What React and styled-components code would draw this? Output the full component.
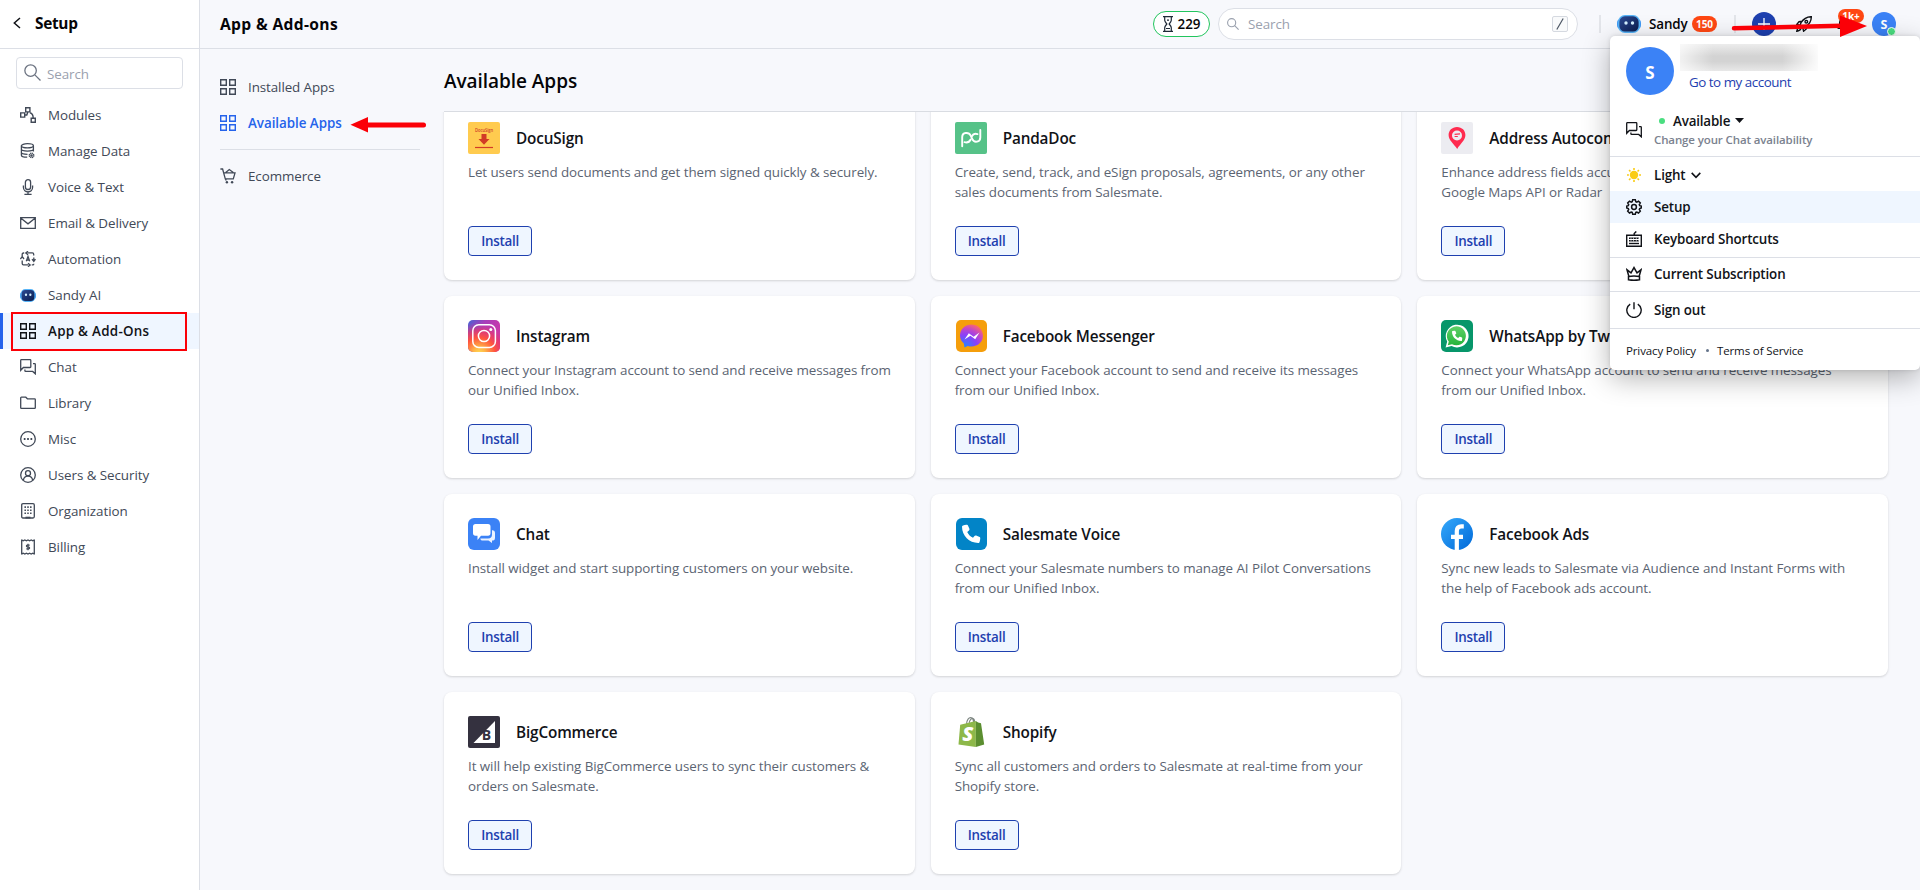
import React from "react";
import styled, { createGlobalStyle } from "styled-components";
import { FaPhone } from "react-icons/fa6";

const GlobalStyle = createGlobalStyle`
  *, *::before, *::after { box-sizing: border-box; }
  body {
    margin: 0;
    overflow: hidden;
    background: #f7f8fc;
    color: #111318;
    font-family: "Open Sans", "Noto Sans", sans-serif;
    font-size: 13.4px;
    letter-spacing: -0.07px;
  }
`;

/* ---------- layout ---------- */

const Page = styled.div`
  position: relative;
  display: flex;
  height: 890px;
  overflow: hidden;
`;

const Sidebar = styled.aside`
  position: relative;
  flex: none;
  width: 200px;
  background: #fff;
  border-right: 1px solid #dcdfe6;
`;

const SidebarHeader = styled.div`
  display: flex;
  align-items: center;
  gap: 14px;
  height: 49px;
  padding: 0 0 2px 13px;
  border-bottom: 1px solid #dcdfe6;
  font-size: 15.4px;
  font-weight: 700;
  letter-spacing: -0.3px;
  color: #050508;
`;

const SidebarSearch = styled.div`
  display: flex;
  align-items: center;
  gap: 6px;
  height: 32px;
  margin: 8px 16px;
  padding: 2px 7px 0;
  border: 1px solid #dcdfe6;
  border-radius: 4px;
  color: #9aa1ae;
  svg { margin-top: -4px; }
`;

const NavItem = styled.a`
  display: flex;
  align-items: center;
  gap: 12px;
  height: 36px;
  padding: 0 0 1px ${(p) => (p.$active ? 17 : 20)}px;
  border-left: ${(p) => (p.$active ? "3px solid #2563eb" : "none")};
  background: ${(p) => (p.$active ? "#eff6ff" : "transparent")};
  color: ${(p) => (p.$active ? "#111318" : "#414957")};
  font-weight: ${(p) => (p.$active ? 600 : 400)};
  letter-spacing: ${(p) => (p.$active ? "0.28px" : "-0.06px")};
  svg { margin-top: 1px; }
`;

const NavFrame = styled.div`
  position: absolute;
  left: 11px;
  top: 312px;
  width: 176px;
  height: 39px;
  border: 2px solid #fb0007;
`;

const Main = styled.div`
  flex: 1;
  min-width: 0;
  display: flex;
  flex-direction: column;
`;

const TopBar = styled.header`
  position: relative;
  flex: none;
  display: flex;
  align-items: center;
  height: 49px;
  padding: 0 24px 0 20px;
  border-bottom: 1px solid #dcdfe6;
`;

const PageTitle = styled.h1`
  flex: 1;
  margin: 0;
  font-size: 15.6px;
  font-weight: 700;
  letter-spacing: 0.35px;
  color: #050508;
`;

const TrialPill = styled.div`
  display: flex;
  align-items: center;
  justify-content: center;
  gap: 5px;
  width: 57px;
  height: 26px;
  margin-right: 8px;
  border: 1px solid #22c55e;
  border-radius: 13px;
  background: #fff;
  font-weight: 600;
  color: #050508;
`;

const GlobalSearch = styled.div`
  display: flex;
  align-items: center;
  gap: 9px;
  width: 360px;
  height: 32px;
  padding: 0 9px 0 8px;
  border: 1px solid #dcdfe6;
  border-radius: 16px;
  background: #fff;
  color: #9aa1ae;
  span { flex: 1; }
`;

const KeyHint = styled.kbd`
  display: flex;
  align-items: center;
  justify-content: center;
  width: 16px;
  height: 16px;
  border: 1px solid #d5d9e0;
  border-radius: 2px;
  background: #f9fafb;
`;

const Separator = styled.i`
  width: 2px;
  height: 18px;
  margin-left: ${(p) => p.$left}px;
  background: #e3e5ea;
`;

const SandyButton = styled.div`
  display: flex;
  align-items: center;
  margin-left: 16px;
  font-weight: 600;
  color: #050508;
  span { width: 39px; margin-left: 8px; letter-spacing: -0.1px; }
`;

const CountBadge = styled.b`
  display: flex;
  align-items: center;
  justify-content: center;
  width: 25px;
  height: 16px;
  margin-left: 4px;
  border-radius: 8px;
  background: #ff4713;
  color: #fff;
  font-size: 10px;
  font-weight: 700;
  letter-spacing: 0;
`;

const AddButton = styled.div`
  display: flex;
  align-items: center;
  justify-content: center;
  width: 24px;
  height: 24px;
  margin: 0 20px 0 16px;
  border-radius: 50%;
  background: #1e40af;
`;

const BellButton = styled.div`
  position: relative;
  display: flex;
  margin: 0 20px 0 24px;
`;

const BellCount = styled.b`
  position: absolute;
  left: 2px;
  top: -7px;
  width: 26px;
  height: 14px;
  border-radius: 7px;
  background: #ff4713;
  color: #fff;
  font-size: 10px;
  line-height: 14px;
  text-align: center;
`;

const Avatar = styled.div`
  position: relative;
  flex: none;
  display: flex;
  align-items: center;
  justify-content: center;
  width: ${(p) => p.$size}px;
  height: ${(p) => p.$size}px;
  padding-top: ${(p) => p.$drop || 0}px;
  border-radius: 50%;
  background: #3b82f6;
  color: #fff;
  font-size: ${(p) => p.$font}px;
  font-weight: 700;
`;

const Presence = styled.i`
  position: absolute;
  right: 0;
  bottom: 0;
  width: 9px;
  height: 9px;
  border: 1px solid #fff;
  border-radius: 50%;
  background: #4ade80;
`;

const Body = styled.div`
  flex: 1;
  min-height: 0;
  display: flex;
`;

const SubNav = styled.nav`
  flex: none;
  width: 220px;
  margin-right: 24px;
  padding: 20px 0 0 20px;
`;

const SubNavItem = styled.a`
  display: flex;
  align-items: center;
  gap: 12px;
  height: 36px;
  color: ${(p) => (p.$active ? "#2563eb" : "#414957")};
  font-weight: ${(p) => (p.$active ? 600 : 400)};
  letter-spacing: ${(p) => (p.$active ? "-0.04px" : "-0.09px")};
`;

const SubNavDivider = styled.hr`
  height: 1px;
  margin: 8px 0;
  border: 0;
  background: #dcdfe6;
`;

const Content = styled.main`
  flex: 1;
  min-width: 0;
  display: flex;
  flex-direction: column;
  padding-right: 32px;
`;

const SectionTitle = styled.h2`
  flex: none;
  height: 63px;
  margin: 0;
  border-bottom: 1px solid #d9dce2;
  font-size: 19px;
  font-weight: 600;
  line-height: 64px;
  letter-spacing: -0.05px;
  color: #050508;
`;

const Scroller = styled.div`
  flex: 1;
  display: flex;
  flex-direction: column;
  justify-content: flex-end;
  overflow: hidden;
  margin: 0 -4px;
  padding: 0 4px 16px;
`;

const CardGrid = styled.div`
  display: grid;
  grid-template-columns: repeat(3, minmax(0, 1fr));
  grid-auto-rows: 182px;
  gap: 16px;
`;

const Card = styled.article`
  display: flex;
  flex-direction: column;
  align-items: flex-start;
  padding: 24px;
  border-radius: 8px;
  background: #fff;
  box-shadow: 0 1px 3px rgba(0, 0, 0, 0.1), 0 1px 2px rgba(0, 0, 0, 0.06);
`;

const CardHead = styled.div`
  display: flex;
  align-items: center;
  gap: 16px;
  height: 32px;
`;

const CardTitle = styled.h3`
  margin: 0;
  padding-bottom: 1px;
  font-size: 15.3px;
  font-weight: 600;
  letter-spacing: -0.14px;
  color: #111318;
`;

const CardText = styled.p`
  height: 40px;
  margin: 8px 0 24px;
  line-height: 20px;
  white-space: pre;
  color: #5b6472;
`;

const InstallButton = styled.button`
  width: 64px;
  height: 30px;
  padding: 0;
  border: 1px solid #1e40af;
  border-radius: 4px;
  background: #eff6ff;
  color: #1e40af;
  font: 600 13.4px "Open Sans", "Noto Sans", sans-serif;
  letter-spacing: -0.28px;
`;

/* ---------- account menu ---------- */

const AccountMenu = styled.div`
  position: absolute;
  left: 1610px;
  top: 36px;
  width: 310px;
  height: 334px;
  border-radius: 5px;
  background: #fff;
  box-shadow: 0 8px 28px rgba(0, 0, 0, 0.3), 0 0 4px rgba(0, 0, 0, 0.12);
`;

const MenuProfile = styled.div`
  display: flex;
  gap: 6px;
  height: 70px;
  padding: 11px 0 0 16px;
`;

const ProfileText = styled.div`
  display: flex;
  flex-direction: column;
  margin-top: -3px;
`;

const RedactedName = styled.div`
  width: 138px;
  height: 27px;
  background:
    linear-gradient(90deg, rgba(255, 255, 255, 0.7), rgba(255, 255, 255, 0) 24%, rgba(255, 255, 255, 0) 74%, rgba(255, 255, 255, 0.9)),
    linear-gradient(180deg, #ececec, #d3d3d3 45%, #d3d3d3 65%, #e8e8e8);
`;

const AccountLink = styled.a`
  margin: 1px 0 0 9px;
  line-height: 20px;
  color: #1e40af;
  letter-spacing: -0.48px;
`;

const MenuStatus = styled.div`
  display: flex;
  align-items: center;
  gap: 12px;
  height: 51px;
  padding: 0 0 2px 16px;
  border-bottom: 1px solid #dcdfe6;
`;

const StatusLine = styled.div`
  display: flex;
  align-items: center;
  margin-top: -1px;
  line-height: 20px;
  font-weight: 600;
  letter-spacing: -0.18px;
  i {
    width: 6px;
    height: 6px;
    margin: 1px 8px 0 5px;
    border-radius: 50%;
    background: #4ade80;
  }
  svg { margin-left: 5px; }
`;

const StatusHint = styled.div`
  font-size: 11.5px;
  font-weight: 600;
  line-height: 18px;
  letter-spacing: -0.12px;
  color: #7b828f;
`;

const MenuGroup = styled.div`
  padding: ${(p) => p.$pad || "0"};
  border-bottom: 1px solid #dcdfe6;
`;

const MenuItem = styled.div`
  display: flex;
  align-items: center;
  gap: 12px;
  height: ${(p) => p.$h || 32}px;
  padding-left: 16px;
  background: ${(p) => (p.$active ? "#eff6ff" : "transparent")};
  font-weight: 600;
  letter-spacing: -0.15px;
  span { display: flex; align-items: center; gap: 6px; }
`;

const MenuFooter = styled.div`
  display: flex;
  align-items: center;
  height: 43px;
  padding-left: 16px;
  font-size: 11.5px;
  letter-spacing: -0.13px;
  i {
    width: 3px;
    height: 3px;
    margin: 0 8px 0 10px;
    border-radius: 50%;
    background: #64748b;
  }
`;

const Arrow = styled.svg`
  position: absolute;
  left: ${(p) => p.$x}px;
  top: ${(p) => p.$y}px;
`;

/* ---------- icons ---------- */

const IconSvg = styled.svg`
  flex: none;
`;

const Line = ({ size = 16, w = 1.3, children }) => (
  <IconSvg width={size} height={size} viewBox="0 0 16 16" fill="none" stroke="currentColor" strokeWidth={w}>
    {children}
  </IconSvg>
);

const GridIcon = () => (
  <Line w={1.4}>
    <path d="M.7.7h5.600v5.600H.7zM9.700.7h5.600v5.600H9.700zM.7 9.700h5.600v5.600H.7zM9.700 9.700h5.600v5.600H9.700z" />
  </Line>
);

const ChatIcon = () => (
  <Line>
    <path d="M.7 11.300V1.400q0-.7.7-.7h8.700q.7 0 .7.7v6.400q0 .7-.7.7H3.400zM13 4.600h1.600q.7 0 .7.7v9.500l-2.600-2.400H5.600q-.7 0-.7-.7v-1.300" />
  </Line>
);

const BotIcon = ({ width = 16, height = 13 }) => (
  <IconSvg width={width} height={height} viewBox="0 0 24 18" preserveAspectRatio="none">
    <defs>
      <linearGradient id="bot" x1="0" y1="0" x2="1" y2="1">
        <stop offset="0" stopColor="#2c4a94" />
        <stop offset="1" stopColor="#0b1c4d" />
      </linearGradient>
    </defs>
    <rect x="0" y="4" width="24" height="10" rx="4" fill="#3f9af5" />
    <rect x="1" y="0" width="22" height="18" rx="7" fill="#57b4f7" />
    <rect x="2.4" y="1.3" width="19.2" height="15.2" rx="5.5" fill="url(#bot)" />
    <circle cx="9" cy="8" r="1.7" fill="#d5f1ff" />
    <circle cx="15.5" cy="8" r="1.7" fill="#d5f1ff" />
  </IconSvg>
);

const SearchIcon = ({ size = 16, w = 1.2 }) => (
  <Line size={size} w={w}>
    <circle cx="6.2" cy="6.2" r="5.4" />
    <path d="M10.2 10.2l5.3 5.3" />
  </Line>
);

const icons = {
  modules: (
    <Line w={1.4}>
      <path d="M5.7.7h4.2v4.2H5.7zM.7 5.9h4v4.2h-4zM11.2 11.2h4.1v4.1h-4.1zM4.7 8h2.1l1-3M9.9 5.7c2 .4 3.3 2 3.3 5.5" />
    </Line>
  ),
  data: (
    <Line w={1.3}>
      <ellipse cx="7.4" cy="2.8" rx="6" ry="2.1" />
      <path d="M1.4 2.8v9.4c0 1.1 2.4 2 5.8 2M13.4 2.8v5.6M1.4 6c0 1.2 2.7 2.1 6 2.1s6-.9 6-2.1M1.4 9.2c0 1.2 2.7 2.1 6.1 2.1" />
      <circle cx="11.5" cy="12.4" r="2.2" strokeDasharray="1.1 .5" strokeWidth="1.5" />
      <circle cx="11.5" cy="12.4" r=".6" />
    </Line>
  ),
  voice: (
    <Line>
      <rect x="5.4" y=".7" width="5.2" height="9.8" rx="2.6" />
      <path d="M3.4 6.5v1.8c0 6 9.2 6 9.2 0V6.5M8 12.8v2.4M4.4 15.3h7.2" />
    </Line>
  ),
  email: (
    <Line>
      <path d="M.7 2.7h14.6v10.6H.7zM1 3.2l7 5.6 7-5.6" />
    </Line>
  ),
  automation: (
    <Line w={1.3}>
      <path d="M4.2 2H3.4q-1.2 0-1.2 1.3v2.2M.4 8l1.8-2.4L4 8M7.6 1.9h4.8q1.3 0 1.3 1.3v1.3M8 .2L5.8 1.9 8 3.7M13.8 6.5v4.2M15.5 8.2l-1.7 2.2-1.8-2.2M2.2 9.5v3q0 1.3 1.3 1.3h4.7M8 12.2l2.2 1.7L8 15.7M11.8 13.9h.9q1.1 0 1.1-1.2M6.3 10.3L8 5.4l1.7 4.9M6.9 9h2.2" />
    </Line>
  ),
  bot: <BotIcon />,
  grid: <GridIcon />,
  chat: <ChatIcon />,
  folder: (
    <Line>
      <path d="M.7 2.9q0-.7.7-.7h4.4l1.6 1.6h7.2q.7 0 .7.7v8.2q0 .7-.7.7H1.4q-.7 0-.7-.7z" />
    </Line>
  ),
  misc: (
    <Line>
      <circle cx="8" cy="8" r="7.3" />
      <path d="M3.8 8h1.7M7.15 8h1.7M10.5 8h1.7" strokeWidth="1.8" />
    </Line>
  ),
  users: (
    <Line>
      <circle cx="8" cy="8" r="7.3" />
      <circle cx="8" cy="6.2" r="2.5" />
      <path d="M3.4 13.3c.5-5.6 8.7-5.6 9.2 0" />
    </Line>
  ),
  org: (
    <Line>
      <path d="M1.7 2q0-1.300 1.3-1.300h10q1.3 0 1.3 1.300v11.500q0 1.5-1.3 1.5H3q-1.300 0-1.300-1.500z" />
      <path d="M5.2 3.300v8M8 3.300v8M10.800 3.300v8" strokeDasharray="1.600 1.500" strokeWidth="1.500" />
      <path d="M5.500 14.600h5" strokeWidth="1.800" />
    </Line>
  ),
  billing: (
    <Line>
      <path d="M1.700.5v15M14.300.5v15" />
      <path d="M1.700 1.200l1.500.6L4.800 1l1.600.8L8 1l1.600.8L11.200 1l1.600.8 1.500-.6M1.700 14.800l1.500-.6 1.600.8 1.600-.8 1.600.8 1.600-.8 1.600.8 1.600-.8 1.500.6" />
      <path d="M9.700 6.200H7.300q-.9.100-.9.900t.9.900h1.400q.9.100.9.900t-.9.900H6.300M8 4.700v6.600" strokeWidth="1.200" />
    </Line>
  ),
  cart: (
    <Line w={1.300}>
      <path d="M.4 1h2.200l2.700 9.900h8l1.700-6H4M5.700 4.600L9.300 1.600l4 3M6.200 12.600l-.7-1.700" />
      <circle cx="6.900" cy="14.200" r="1.200" fill="currentColor" stroke="none" />
      <circle cx="12.100" cy="14.200" r="1.200" fill="currentColor" stroke="none" />
    </Line>
  ),
};

const Hourglass = () => (
  <svg width="10" height="16" viewBox="0 0 10 16" fill="none" stroke="#1f2937" strokeWidth="1.2">
    <path d="M0 .7h10M0 15.300h10M1.700.7v3.600Q1.700 5.500 3.800 8 1.700 10.500 1.700 11.700v3.600M8.300.7v3.600Q8.300 5.500 6.200 8q2.100 2.500 2.100 3.700v3.600" />
    <path d="M3 12.500h4M4 4.200h2" />
  </svg>
);

const Rocket = () => (
  <svg width="16" height="16" viewBox="0 0 16 16" fill="none" stroke="#111318" strokeWidth="1.400">
    <path d="M15.300.7C11 .6 8 2 5 6.600L4.200 9.200l2.600 2.600 2.600-.8C14 8 15.400 5 15.300.7zM6.200 5.200L3 5.700.8 8.400l3.400.7M10.800 9.800L10.300 13l-2.700 2.200-.8-3.400M3.500 11.100Q1.400 11.700.8 15.200q3.500-.6 4.100-2.700" />
    <circle cx="10.300" cy="5.700" r="1.300" />
  </svg>
);

const Bell = () => (
  <Line w={1.400}>
    <path d="M2.500 12.300h11l-1.200-2V6.500a4.300 4.300 0 0 0-8.600 0v3.800z" />
  </Line>
);

const Sun = () => (
  <svg width="16" height="16" viewBox="0 0 16 16">
    <circle cx="8" cy="8" r="4.200" fill="#facc15" />
    <path d="M8 1v1.900M8 13.100V15M1 8h1.900M13.100 8H15M3.050 3.050l1.400 1.400M11.550 11.550l1.400 1.400M3.050 12.950l1.400-1.400M11.550 4.450l1.400-1.400" stroke="#facc15" strokeWidth="1.600" />
  </svg>
);

const Gear = () => (
  <Line w={1.500}>
    <circle cx="8" cy="8" r="2.400" />
    <path d="M6.700.8h2.600l.5 1.900 1 .4 1.700-1 1.800 1.800-1 1.700.4 1 1.600.5v1.900l-1.600.5-.4 1 1 1.700-1.800 1.800-1.700-1-1 .4-.5 1.900H6.700l-.5-1.900-1-.4-1.700 1-1.800-1.800 1-1.700-.4-1L.7 9V7.100l1.600-.5.4-1-1-1.700 1.800-1.800 1.700 1 1-.4z" />
  </Line>
);

const Keyboard = () => (
  <Line w={1.400}>
    <path d="M.7 4.200h14.600v11.100H.7zM8.200 4V2.600L10.300.4M3 7.300h10M3 9.800h10" />
    <path d="M3 7.300h10M3 9.800h10" stroke="#fff" strokeWidth="1.500" strokeDasharray=".6 2" strokeDashoffset="-1.700" />
    <path d="M3 12.500h10" />
  </Line>
);

const Crown = () => (
  <Line w={1.500}>
    <path d="M2.900 10.500L1 3.800l4 3L8 1.600l3 5.200 4-3-1.900 6.700M2.500 10.600q5.500-1 11 0v3.200q-5.500 1-11 0z" />
  </Line>
);

const Power = () => (
  <Line w={1.400}>
    <path d="M4.200 2.100a7.200 7.200 0 1 0 7.600 0M8 .3v7" />
  </Line>
);

/* ---------- app logos ---------- */

const Logo = ({ bg, r = 2, children }) => (
  <IconSvg width="32" height="32" viewBox="0 0 32 32">
    {bg && <rect width="32" height="32" rx={r} fill={bg} />}
    {children}
  </IconSvg>
);

const logos = {
  docusign: (
    <Logo bg="#ffcb4f">
      <text x="7" y="10" fontSize="5" textLength="18" lengthAdjust="spacingAndGlyphs" fill="#d0402b" fontFamily="Open Sans" fontWeight="600">DocuSign</text>
      <path d="M13.500 12h5v5h3L16 22.800 10.500 17h3z" fill="#d23b26" />
      <path d="M7 25.500h18" stroke="#d23b26" strokeWidth="1.200" />
    </Logo>
  ),
  pandadoc: (
    <Logo bg="#56c288">
      <g fill="none" stroke="#fff" strokeWidth="1.900" strokeLinecap="round">
        <path d="M7.200 24.300V15.200c0-5 6.500-5.600 8.500-1.500l1.500 3.200c2 4.500 8.100 3.300 8.100-1.500V8" />
        <path d="M9.500 20.200c3 .8 5-.3 6.200-2.700M17 14c1-2 3.300-2.700 5.500-1.900" />
      </g>
    </Logo>
  ),
  address: (
    <Logo bg="#ececf1">
      <path d="M16 5c-5 0-8.400 3.600-8.400 8.100C7.600 18.500 13 22 16.200 27 19 22 24.400 18.500 24.400 13.100 24.400 8.600 21 5 16 5z" fill="#ff2b4f" />
      <circle cx="16" cy="13.500" r="5" fill="#ececf1" />
      <path d="M13.600 12.300l5.400-.4M13.600 14.500h3.200" stroke="#ff2b4f" strokeWidth="1.200" />
    </Logo>
  ),
  instagram: (
    <Logo>
      <defs>
        <linearGradient id="ig1" x1="0" y1="0" x2="1" y2=".25">
          <stop offset="0" stopColor="#4a62d4" />
          <stop offset=".5" stopColor="#a43dbb" />
          <stop offset="1" stopColor="#c837ab" />
        </linearGradient>
        <radialGradient id="ig2" cx=".35" cy="1.050" r="1">
          <stop offset="0" stopColor="#ffdd55" />
          <stop offset=".2" stopColor="#ffb347" />
          <stop offset=".5" stopColor="#ff543e" />
          <stop offset=".72" stopColor="#e83a6b" stopOpacity=".8" />
          <stop offset="1" stopColor="#c837ab" stopOpacity="0" />
        </radialGradient>
      </defs>
      <rect width="32" height="32" rx="5" fill="url(#ig1)" />
      <rect width="32" height="32" rx="5" fill="url(#ig2)" />
      <g fill="none" stroke="#fff" strokeWidth="1.500">
        <rect x="4.800" y="4.800" width="22.600" height="22.600" rx="6" />
        <circle cx="16" cy="16" r="5.600" />
      </g>
      <circle cx="22.800" cy="9.400" r="1.500" fill="#fff" />
    </Logo>
  ),
  messenger: (
    <Logo>
      <defs>
        <radialGradient id="ms" cx=".2" cy="1" r="1.100">
          <stop offset="0" stopColor="#1f8bff" />
          <stop offset=".5" stopColor="#8a3ff9" />
          <stop offset=".75" stopColor="#c246c8" />
          <stop offset="1" stopColor="#ff6968" />
        </radialGradient>
      </defs>
      <rect x="1" width="31" height="32" rx="5" fill="#f59e0b" />
      <path d="M16.500 4.500C10 4.500 5 9.200 5 15.600c0 3.300 1.400 5.900 3.800 7.800L9.500 27.600l3.300-1.600c1.200.4 2.400.5 3.700.5C23 26.500 28 22 28 15.600S23 4.500 16.500 4.500z" fill="url(#ms)" />
      <path d="M9.500 19.500l4.300-6.300 4.800 3.500 5.900-4.200-4.300 6.800-4.800-3.500z" fill="#fff" />
    </Logo>
  ),
  whatsapp: (
    <Logo bg="#07966a" r={5}>
      <defs>
        <linearGradient id="wa" x1="0" y1="0" x2="0" y2="1">
          <stop offset="0" stopColor="#5fd068" />
          <stop offset="1" stopColor="#25b43a" />
        </linearGradient>
      </defs>
      <path d="M4.600 27.500l1.600-5.900A11.400 11.400 0 1 1 10.600 26z" fill="#fff" />
      <path d="M6.800 25.300l1-3.700A9.500 9.500 0 1 1 11 24.300z" fill="url(#wa)" />
      <g transform="translate(11 10.500)" color="#fff"><FaPhone size={10.500} /></g>
    </Logo>
  ),
  chat: (
    <Logo bg="#3b82f6" r={6}>
      <path d="M7.500 6H20q2.500 0 2.500 2.500V15q0 2.800-2.500 2.800h-7L9.500 22v-4.200H7.500Q5 17.800 5 15V8.500Q5 6 7.500 6z" fill="#fff" />
      <path d="M24 12.200h.8q2.200.4 2.200 2.500V20q0 2.200-1.700 2.500H24V25l-3.500-2.500H14q-1.500 0-1.700-2H20q4 0 4-4z" fill="#eaf2ff" />
    </Logo>
  ),
  voice: (
    <Logo>
      <rect x="1" width="31" height="32" rx="6" fill="#0284c7" />
      <g transform="translate(7 6.500)" color="#fff"><FaPhone size={18.500} /></g>
    </Logo>
  ),
  facebook: (
    <Logo>
      <defs>
        <linearGradient id="fb" x1="0" y1="0" x2="1" y2="1">
          <stop offset="0" stopColor="#35a9fb" />
          <stop offset="1" stopColor="#0068d8" />
        </linearGradient>
      </defs>
      <circle cx="16" cy="16" r="16" fill="url(#fb)" />
      <path d="M15.800 32V13q0-4.700 4.500-4.700h2.500M10 18.800h12" fill="none" stroke="#fff" strokeWidth="4.200" />
    </Logo>
  ),
  bigcommerce: (
    <Logo bg="#34313f">
      <path d="M27 5v22H5.500z" fill="#fff" />
      <text x="13.800" y="24" fontSize="14" fontWeight="700" fontFamily="Open Sans" fill="#34313f">B</text>
    </Logo>
  ),
  shopify: (
    <Logo>
      <path d="M11.500 8c.5-4 2.500-6.500 4.500-6.400 2 0 2.500 2.600 2.600 5.400M14 7.500c.8-3.700 2.500-5.400 4-5 1.300.4 1.700 2.300 1.700 4" fill="none" stroke="#7c8580" strokeWidth="1.100" />
      <path d="M5.200 8.800L20.800 5v26L3.500 28.400z" fill="#8db849" />
      <path d="M20.800 5l2.300 1.500 2.900.7 3.200 21.300-8.400 2.500z" fill="#5b8e30" />
      <text x="7.300" y="25" fontSize="20" fontWeight="800" fontStyle="italic" fontFamily="Open Sans" fill="#fff" textLength="11" lengthAdjust="spacingAndGlyphs">S</text>
    </Logo>
  ),
};

/* ---------- data ---------- */

const navItems = [
  ["modules", "Modules"],
  ["data", "Manage Data"],
  ["voice", "Voice & Text"],
  ["email", "Email & Delivery"],
  ["automation", "Automation"],
  ["bot", "Sandy AI"],
  ["grid", "App & Add-Ons"],
  ["chat", "Chat"],
  ["folder", "Library"],
  ["misc", "Misc"],
  ["users", "Users & Security"],
  ["org", "Organization"],
  ["billing", "Billing"],
];

const apps = [
  ["docusign", "DocuSign", "Let users send documents and get them signed quickly & securely."],
  ["pandadoc", "PandaDoc", "Create, send, track, and eSign proposals, agreements, or any other\nsales documents from Salesmate."],
  ["address", "Address Autocomplete", "Enhance address fields accuracy\nGoogle Maps API or Radar"],
  ["instagram", "Instagram", "Connect your Instagram account to send and receive messages from\nour Unified Inbox."],
  ["messenger", "Facebook Messenger", "Connect your Facebook account to send and receive its messages\nfrom our Unified Inbox."],
  ["whatsapp", "WhatsApp by Twilio", "Connect your WhatsApp account to send and receive messages\nfrom our Unified Inbox."],
  ["chat", "Chat", "Install widget and start supporting customers on your website."],
  ["voice", "Salesmate Voice", "Connect your Salesmate numbers to manage AI Pilot Conversations\nfrom our Unified Inbox."],
  ["facebook", "Facebook Ads", "Sync new leads to Salesmate via Audience and Instant Forms with\nthe help of Facebook ads account."],
  ["bigcommerce", "BigCommerce", "It will help existing BigCommerce users to sync their customers &\norders on Salesmate."],
  ["shopify", "Shopify", "Sync all customers and orders to Salesmate at real-time from your\nShopify store."],
];

export default function App() {
  return (
    <>
      <GlobalStyle />
      <Page>
        <Sidebar>
          <SidebarHeader>
            <svg width="8" height="12" viewBox="0 0 8 12" fill="none" stroke="#111318" strokeWidth="1.500">
              <path d="M7 1L1.300 6 7 11" />
            </svg>
            Setup
          </SidebarHeader>
          <SidebarSearch>
            <svg width="17" height="17" viewBox="0 0 16 16" fill="none" stroke="#6b7280" strokeWidth="1.200">
              <circle cx="6.200" cy="6.200" r="5.400" />
              <path d="M10.200 10.200l5.300 5.300" />
            </svg>
            Search
          </SidebarSearch>
          {navItems.map(([icon, label]) => (
            <NavItem key={label} $active={icon === "grid"}>
              {icons[icon]}
              {label}
            </NavItem>
          ))}
          <NavFrame />
        </Sidebar>

        <Main>
          <TopBar>
            <PageTitle>App &amp; Add-ons</PageTitle>
            <TrialPill>
              <Hourglass />
              229
            </TrialPill>
            <GlobalSearch>
              <SearchIcon size={12} w={1.500} />
              <span>Search</span>
              <KeyHint>
                <svg width="8" height="12" viewBox="0 0 8 12" stroke="#4b5563" strokeWidth="1.200">
                  <path d="M7.200.5L.8 11.500" />
                </svg>
              </KeyHint>
            </GlobalSearch>
            <Separator $left={21} />
            <SandyButton>
              <BotIcon width={24} height={18} />
              <span>Sandy</span>
              <CountBadge>150</CountBadge>
            </SandyButton>
            <Separator $left={17} />
            <AddButton>
              <svg width="12" height="12" stroke="#fff" strokeWidth="1.300">
                <path d="M6 0v12M0 6h12" />
              </svg>
            </AddButton>
            <Rocket />
            <BellButton>
              <Bell />
              <BellCount>1k+</BellCount>
            </BellButton>
            <Avatar $size={24} $font={12.500} $drop={1}>
              S
              <Presence />
            </Avatar>
          </TopBar>

          <Body>
            <SubNav>
              <SubNavItem>
                <GridIcon />
                Installed Apps
              </SubNavItem>
              <SubNavItem $active>
                <GridIcon />
                Available Apps
              </SubNavItem>
              <SubNavDivider />
              <SubNavItem>
                {icons.cart}
                Ecommerce
              </SubNavItem>
            </SubNav>

            <Content>
              <SectionTitle>Available Apps</SectionTitle>
              <Scroller>
                <CardGrid>
                  {apps.map(([logo, title, text]) => (
                    <Card key={title}>
                      <CardHead>
                        {logos[logo]}
                        <CardTitle>{title}</CardTitle>
                      </CardHead>
                      <CardText>{text}</CardText>
                      <InstallButton>Install</InstallButton>
                    </Card>
                  ))}
                </CardGrid>
              </Scroller>
            </Content>
          </Body>
        </Main>

        <AccountMenu>
          <MenuProfile>
            <Avatar $size={48} $font={17} $drop={2}>S</Avatar>
            <ProfileText>
              <RedactedName />
              <AccountLink>Go to my account</AccountLink>
            </ProfileText>
          </MenuProfile>
          <MenuStatus>
            <ChatIcon />
            <div>
              <StatusLine>
                <i />
                Available
                <svg width="9" height="5" viewBox="0 0 9 5"><path d="M0 0h9L4.500 5z" fill="#111318" /></svg>
              </StatusLine>
              <StatusHint>Change your Chat availability</StatusHint>
            </div>
          </MenuStatus>
          <MenuGroup $pad="2px 0">
            <MenuItem>
              <Sun />
              <span>
                Light
                <svg width="10" height="7" viewBox="0 0 10 7" fill="none" stroke="#111318" strokeWidth="1.600"><path d="M.7.9L5 5.300 9.300.9" /></svg>
              </span>
            </MenuItem>
            <MenuItem $active>
              <Gear />
              Setup
            </MenuItem>
            <MenuItem>
              <Keyboard />
              Keyboard Shortcuts
            </MenuItem>
          </MenuGroup>
          <MenuGroup $pad="0 0 1px">
            <MenuItem $h={32}>
              <Crown />
              Current Subscription
            </MenuItem>
          </MenuGroup>
          <MenuGroup>
            <MenuItem $h={36}>
              <Power />
              Sign out
            </MenuItem>
          </MenuGroup>
          <MenuFooter>
            Privacy Policy
            <i />
            Terms of Service
          </MenuFooter>
        </AccountMenu>

        <Arrow $x={350} $y={116} width="78" height="18">
          <path d="M15 9h58.500" stroke="#fb0007" strokeWidth="5" strokeLinecap="round" />
          <path d="M.5 8.700L18 1v15.500z" fill="#fb0007" />
        </Arrow>
        <Arrow $x={1730} $y={14} width="140" height="26">
          <path d="M4 14.200L112 11.800" stroke="#fb0007" strokeWidth="4.500" strokeLinecap="round" />
          <path d="M137 12L110 1.500v21.500z" fill="#fb0007" />
        </Arrow>
      </Page>
    </>
  );
}
